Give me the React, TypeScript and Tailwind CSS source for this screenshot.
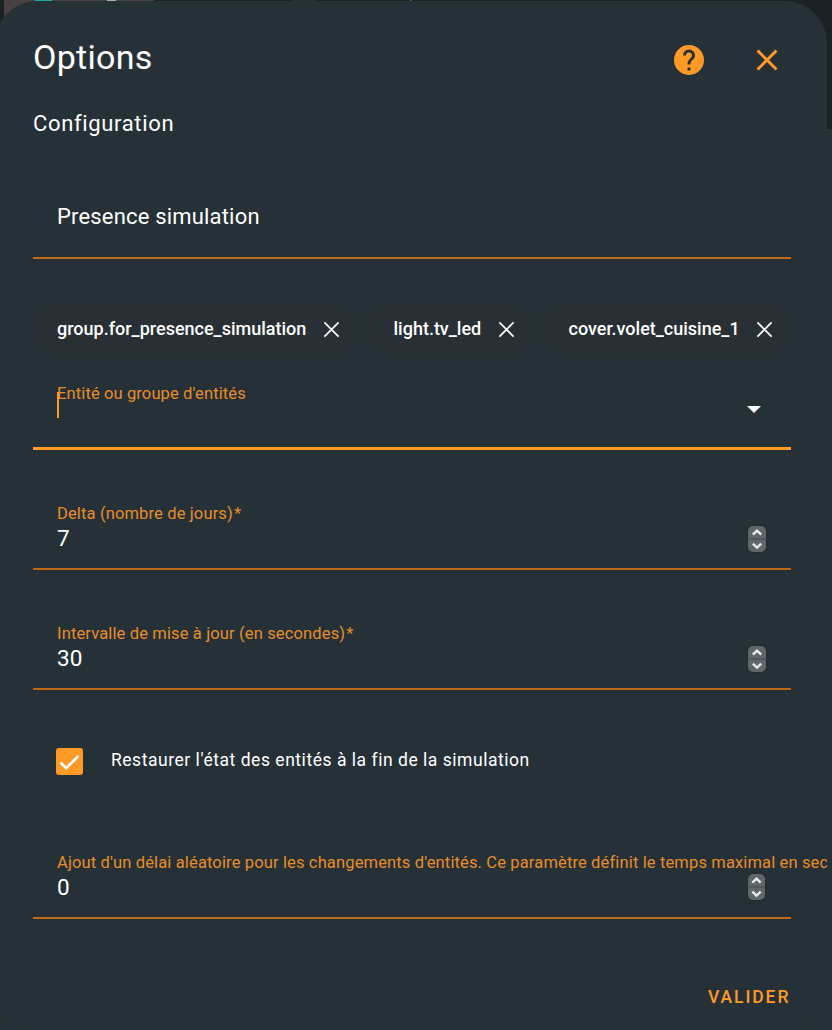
import React from "react";

function Cross({ className }: { className: string }) {
  return (
    <svg viewBox="0 0 17 17" className={className} fill="none" stroke="currentColor" strokeWidth="1.7">
      <path d="M1.4 1.4L15.6 15.6M15.6 1.4L1.4 15.6" />
    </svg>
  );
}

function Chip({ label, className }: { label: string; className: string }) {
  return (
    <div className={`flex h-12 shrink-0 items-center justify-between rounded-full bg-[#282f35] ${className}`}>
      <span className="text-[18px] leading-6 font-medium whitespace-nowrap">{label}</span>
      <Cross className="mt-px size-[17px]" />
    </div>
  );
}

function Stepper({ className }: { className: string }) {
  return (
    <span className={`flex h-[26px] shrink-0 flex-col overflow-hidden rounded-[5px] bg-[#5f676b] shadow-[0_0_2px_#151c20] ${className}`}>
      <svg viewBox="0 0 18 26" className="h-[26px] w-full" preserveAspectRatio="xMidYMid slice" fill="none">
        <path d="M0 13H18" stroke="#50585b" strokeWidth="2" />
        <path d="M4.8 8.6L9 4.6L13.2 8.6M4.8 17.6L9 21.6L13.2 17.6" stroke="#e8eaea" strokeWidth="2.4" />
      </svg>
    </span>
  );
}

function NumberField({
  label,
  required,
  value,
  className,
  stepper,
}: {
  label: string;
  required?: boolean;
  value: string;
  className: string;
  stepper: string;
}) {
  return (
    <label className={`flex h-[84px] shrink-0 flex-col border-b-2 border-[#c06a15] px-6 pt-4 ${className}`}>
      <span className="text-[16.5px] leading-6 tracking-[0.14px] whitespace-nowrap text-[#e68d28]">
        {label}
        {required && <span className="ml-px">*</span>}
      </span>
      <span className="flex h-7 items-center justify-between">
        <span className="-mt-1 text-[22.5px] leading-7 tracking-[0.1px]">{value}</span>
        <Stepper className={stepper} />
      </span>
    </label>
  );
}

export default function App() {
  return (
    <div className="flex h-[1030px] w-[832px] flex-col overflow-hidden bg-[#263137] font-['Roboto',sans-serif] text-white">
      <div className="flex h-[129px] shrink-0 bg-[#1b2225]">
        <div className="ml-1 h-10 w-[150px] bg-[#484143]">
          <div className="ml-[31px] flex h-1 gap-[55px]">
            <i className="w-[17px] bg-[#21a59c]" />
            <i className="w-[9px] bg-[#a8b4b6]" />
          </div>
        </div>
        <div className="ml-[138px] h-1 w-6 bg-[#263137]" />
        <div className="ml-[94px] h-1 w-[2px] bg-[#6e501f]" />
      </div>

      <main className="-mt-32 -ml-[5px] flex h-[1029px] w-[832px] shrink-0 flex-col overflow-hidden rounded-[42px] bg-[#263137] pr-9 pl-[38px]">
        <header className="flex h-[107px] shrink-0 items-start justify-between">
          <h1 className="mt-9 text-[34px] leading-10 tracking-[0.3px]">Options</h1>
          <div className="mt-[41px] mr-[6px] flex items-center text-[#ff9a27]">
            <svg viewBox="0 0 24 24" className="size-9" fill="currentColor">
              <path d="M15.07 11.25L14.17 12.17C13.45 12.89 13 13.5 13 15H11V14.5C11 13.39 11.45 12.39 12.17 11.67L13.41 10.41C13.78 10.05 14 9.55 14 9C14 7.89 13.1 7 12 7A2 2 0 0 0 10 9H8A4 4 0 0 1 12 5A4 4 0 0 1 16 9C16 9.88 15.64 10.67 15.07 11.25M13 19H11V17H13M12 2A10 10 0 0 0 2 12A10 10 0 0 0 12 22A10 10 0 0 0 22 12C22 6.47 17.5 2 12 2Z" />
            </svg>
            <svg viewBox="0 0 24 24" className="ml-[42px] size-9" fill="currentColor">
              <path d="M19 6.41L17.59 5L12 10.59L6.41 5L5 6.41L10.59 12L5 17.59L6.41 19L12 13.41L17.59 19L19 17.59L13.41 12L19 6.41Z" />
            </svg>
          </div>
        </header>

        <h2 className="h-8 shrink-0 text-[22px] leading-8 tracking-[0.65px]">Configuration</h2>

        <div className="mt-[35px] h-[84px] shrink-0 border-b-2 border-[#c06a15] px-6 pt-7">
          <span className="block text-[22px] leading-7 tracking-[0.18px]">Presence simulation</span>
        </div>

        <div className="mt-[46px] flex shrink-0 gap-3">
          <Chip label="group.for_presence_simulation" className="w-[324px] pr-[17px] pl-6" />
          <Chip label="light.tv_led" className="w-[163.5px] pr-[17.5px] pl-[24.5px]" />
          <Chip label="cover.volet_cuisine_1" className="w-[246px] pr-[17.5px] pl-6" />
        </div>

        <div className="mt-[13px] flex h-[84px] shrink-0 justify-between border-b-[3px] border-[#ff9a27] pr-[30px] pl-6">
          <div className="relative pt-4">
            <span className="block text-[16.5px] leading-6 tracking-[0.12px] text-[#e68d28]">Entité ou groupe d'entités</span>
            <i className="absolute top-[26px] left-0 h-[26px] w-0.5 bg-[#ff9a27]" />
          </div>
          <svg viewBox="0 0 14 7" className="mt-10 h-[7px] w-[14px]" fill="currentColor">
            <path d="M0 0H14L7 7Z" />
          </svg>
        </div>

        <NumberField label="Delta (nombre de jours)" required value="7" className="mt-9" stepper="w-[18px] mr-px -mt-0.5" />
        <NumberField label="Intervalle de mise à jour (en secondes)" required value="30" className="mt-9" stepper="w-[18px] mr-px -mt-0.5" />

        <label className="mt-[55px] flex h-[30px] shrink-0 items-center pl-[23px]">
          <span className="mt-0.5 size-[27px] rounded-[3px] bg-[#ff9a27]">
            <svg viewBox="0 0 27 27" className="size-[27px]" fill="none" stroke="white" strokeWidth="2.7">
              <path d="M4.5 14.5L10.2 20.2L22.3 8" />
            </svg>
          </span>
          <span className="ml-7 text-[17.5px] leading-7 tracking-[0.53px]">Restaurer l'état des entités à la fin de la simulation</span>
        </label>

        <NumberField
          label="Ajout d'un délai aléatoire pour les changements d'entités. Ce paramètre définit le temps maximal en secondes"
          value="0"
          className="mt-[60px]"
          stepper="w-[17px] mr-[2px] -mt-1"
        />

        <footer className="mt-[64px] flex shrink-0 justify-end">
          <button className="mr-[0.7px] text-[17.5px] leading-7 font-medium tracking-[1.9px] text-[#ff9a27]">VALIDER</button>
        </footer>
      </main>
    </div>
  );
}
